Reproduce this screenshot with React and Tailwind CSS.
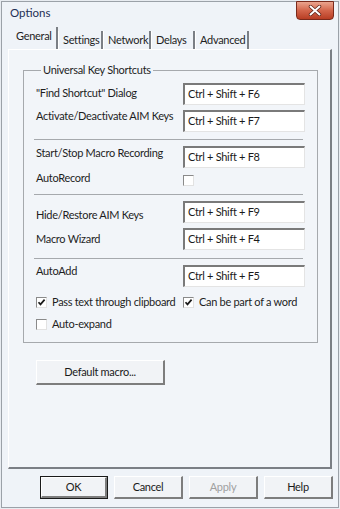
const font = { fontFamily: 'Lato, "Noto Sans", sans-serif' }

const CheckBox = ({ checked }) => (
    <span className="flex h-[11px] w-[11px] shrink-0 items-center justify-center border-t border-l border-t-[#8a8a8a] border-l-[#8a8a8a] border-r border-b border-r-[#e2e2e2] border-b-[#e2e2e2] bg-white">
        {checked && (
            <svg width="9" height="9" viewBox="0 0 9 9">
                <path d="M1.5 4.2 L3.5 6.4 L7.6 1.6" fill="none" stroke="#1a1a1a" strokeWidth="1.7" />
            </svg>
        )}
    </span>
)

const KeyBox = ({ value }) => (
    <div className="flex h-[22px] w-[122px] items-center border-t-2 border-l-2 border-t-[#7a7a7a] border-l-[#7a7a7a] border-r border-b border-r-[#e4e4e4] border-b-[#e4e4e4] bg-white pl-[3px] text-[#1a1a1a]">
        {value}
    </div>
)

const Row = ({ label, value, labelOffset, className = '' }) => (
    <div className={`flex items-start ${className}`}>
        <div className={`w-[147px] leading-[16px] ${labelOffset}`}>{label}</div>
        <KeyBox value={value} />
    </div>
)

const Separator = ({ className = '' }) => (
    <div className={`-ml-[2px] h-px w-[269px] bg-[#a6a9ad] ${className}`} />
)

const Button = ({ children, isDefault, disabled, className = '' }) => (
    <button
        className={`flex items-center justify-center bg-[#f1f3f6] ${isDefault ? 'border border-[#1a1a1a]' : ''} ${className}`}
    >
        <span className="flex h-full w-full items-center justify-center border-t border-l border-t-white border-l-white border-r-2 border-b-2 border-r-[#7d7d7d] border-b-[#7d7d7d]">
            <span className={disabled ? 'text-[#a0a0a0]' : 'text-[#1a1a1a]'}>{children}</span>
        </span>
    </button>
)

const tabs = [
    { name: 'General', w: 'w-[46px]' },
    { name: 'Settings', w: 'w-[45px]' },
    { name: 'Network', w: 'w-[48px]' },
    { name: 'Delays', w: 'w-[44px]' },
    { name: 'Advanced', w: 'w-[54px]' },
]

export default function App() {
    return (
        <div className="h-[509px] w-[340px] whitespace-nowrap bg-[#e8ecf1] p-px text-[11px] tracking-[-0.3px] text-[#1e1e1e]" style={font}>
            <div className="flex h-full w-full flex-col border border-[#9ba1a8] bg-[#eff3f8]">
                {/* Title bar */}
                <div className="flex h-[25px] items-start justify-between">
                    <span className="ml-[8px] mt-[2px] text-[11.5px] tracking-normal text-[#1e2f55]">Options</span>
                    <div className="-mt-px mr-[4px] flex h-[19px] w-[38px] items-center justify-center rounded-b-[4px] border border-[#7a2a1c] bg-linear-to-b from-[#eaa48e] via-[#d3654b] to-[#b83d23]">
                        <svg width="14" height="11" viewBox="0 0 14 11">
                            <path d="M2.5 1.5 L11.5 9.5 M11.5 1.5 L2.5 9.5" stroke="#5a2014" strokeWidth="3.4" strokeLinecap="round" />
                            <path d="M2.5 1.5 L11.5 9.5 M11.5 1.5 L2.5 9.5" stroke="#ffffff" strokeWidth="2" strokeLinecap="round" />
                        </svg>
                    </div>
                </div>

                {/* Tabs */}
                <div className="flex h-[22px] items-end pl-[10px]">
                    {tabs.map((t, i) => (
                        <div
                            key={t.name}
                            className={`${t.w} flex items-center border-r-2 border-r-[#7b7f85] pl-[4px] ${i === 0 ? 'h-[22px] pb-[3px]' : 'h-[18px] border-l border-l-white'}`}
                        >
                            {t.name}
                        </div>
                    ))}
                </div>

                {/* Panel */}
                <div className="ml-[6px] h-[420px] w-[324px] border-t border-l border-t-white border-l-white border-r-2 border-b-2 border-r-[#7b7f85] border-b-[#7b7f85] bg-[#f2f5f9]">
                    <fieldset className="ml-[14px] mt-[13px] w-[295px] border border-[#a6a9ad] pb-[10px] pl-[12px]">
                        <legend className="ml-[5px] px-[2px] leading-[14px]">Universal Key Shortcuts</legend>

                        <Row className="mt-[6px]" label={'"Find Shortcut" Dialog'} value="Ctrl + Shift + F6" labelOffset="mt-[2px]" />
                        <Row className="mt-[5px]" label="Activate/Deactivate AIM Keys" value="Ctrl + Shift + F7" labelOffset="-mt-[2px]" />
                        <Separator className="mt-[7px]" />
                        <Row className="mt-[6px]" label="Start/Stop Macro Recording" value="Ctrl + Shift + F8" labelOffset="-mt-px" />

                        <div className="mt-[7px] flex items-start">
                            <div className="-mt-[5px] w-[147px] leading-[16px]">AutoRecord</div>
                            <CheckBox />
                        </div>

                        <Separator className="mt-[8px]" />
                        <Row className="mt-[6px]" label="Hide/Restore AIM Keys" value="Ctrl + Shift + F9" labelOffset="mt-[6px]" />
                        <Row className="mt-[5px]" label="Macro Wizard" value="Ctrl + Shift + F4" labelOffset="mt-[3px]" />
                        <Separator className="mt-[8px]" />
                        <Row className="mt-[6px]" label="AutoAdd" value="Ctrl + Shift + F5" labelOffset="-mt-[2px]" />

                        <div className="mt-[7px] flex items-center">
                            <div className="flex w-[147px] items-center gap-[5px]">
                                <CheckBox checked />
                                <span className="leading-[16px]">Pass text through clipboard</span>
                            </div>
                            <div className="flex items-center gap-[5px]">
                                <CheckBox checked />
                                <span className="leading-[16px]">Can be part of a word</span>
                            </div>
                        </div>

                        <div className="mt-[6px] flex items-center gap-[5px]">
                            <CheckBox />
                            <span className="leading-[16px]">Auto-expand</span>
                        </div>
                    </fieldset>

                    <Button className="ml-[27px] mt-[17px] h-[25px] w-[129px]">Default macro...</Button>
                </div>

                {/* Dialog buttons */}
                <div className="mt-[7px] flex gap-[6px] pl-[38px]">
                    <Button isDefault className="h-[23px] w-[68px]">OK</Button>
                    <Button className="h-[23px] w-[69px]">Cancel</Button>
                    <Button disabled className="h-[23px] w-[69px]">Apply</Button>
                    <Button className="h-[23px] w-[69px]">Help</Button>
                </div>
            </div>
        </div>
    )
}
